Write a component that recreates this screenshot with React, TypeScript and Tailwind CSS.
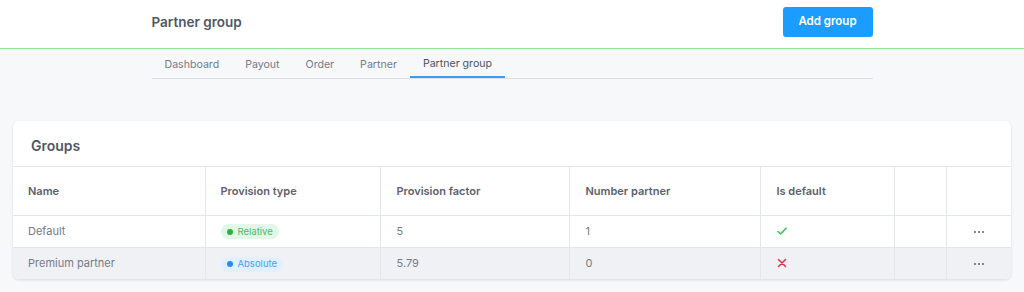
import React from 'react';

const tabs = ['Dashboard', 'Payout', 'Order', 'Partner', 'Partner group'];

type Group = {
    name: string;
    type: 'Relative' | 'Absolute';
    factor: string;
    partners: number;
    isDefault: boolean;
};

const groups: Group[] = [
    { name: 'Default', type: 'Relative', factor: '5', partners: 1, isDefault: true },
    { name: 'Premium partner', type: 'Absolute', factor: '5.79', partners: 0, isDefault: false },
];

const TypeBadge: React.FC<{ type: Group['type'] }> = ({ type }) =>
    type === 'Relative' ? (
        <span className="inline-flex items-center h-[15px] px-[6px] rounded-full bg-[#e2f7e6] text-[#4cbc62] text-[9.5px] align-middle">
            <span className="w-[6px] h-[6px] rounded-full bg-[#27b33f] mr-[5px]" />
            Relative
        </span>
    ) : (
        <span className="inline-flex items-center h-[15px] px-[6px] rounded-full bg-[#e2efff] text-[#4a9ff0] text-[9.5px] align-middle">
            <span className="w-[6px] h-[6px] rounded-full bg-[#1f8ef5] mr-[5px]" />
            Absolute
        </span>
    );

const App: React.FC = () => {
    return (
        <div className="min-h-[292px] bg-[#f7f8fa] font-['Inter',sans-serif]">
            <header className="bg-white border-b border-[#8fe89a]">
                <div className="w-[721px] mx-auto h-[48px] flex items-center justify-between">
                    <h1 className="text-[13.5px] font-semibold text-[#4f5765] -mt-[4px]">Partner group</h1>
                    <button className="h-[30px] w-[90px] -mt-[4px] rounded-[3px] bg-[#1b9cff] text-white text-[11.5px] font-semibold">
                        Add group
                    </button>
                </div>
            </header>

            <nav className="w-[721px] mx-auto flex border-b border-[#dde1e7]">
                {tabs.map(tab => (
                    <button
                        key={tab}
                        className={
                            tab === 'Partner group'
                                ? 'px-[13px] h-[29px] pt-[2px] text-[10.6px] text-[#4b5260] border-b-2 border-[#3a9df0] -mb-px'
                                : 'px-[13px] h-[29px] pt-[2px] text-[10.6px] text-[#737b88]'
                        }
                    >
                        {tab}
                    </button>
                ))}
            </nav>

            <div className="px-[13px] pt-[42px]">
                <div className="bg-white rounded-[6px] shadow-[0_1px_3px_rgba(0,0,0,0.12)] overflow-hidden">
                    <div className="h-[46px] flex items-center px-[18px] pt-[4px] border-b border-[#e3e6ea]">
                        <h2 className="text-[14px] font-semibold text-[#4f5765]">Groups</h2>
                    </div>
                    <table className="w-full border-collapse table-fixed text-[11px]">
                        <colgroup>
                            <col className="w-[192px]" />
                            <col className="w-[175px]" />
                            <col className="w-[189px]" />
                            <col className="w-[191px]" />
                            <col className="w-[134px]" />
                            <col className="w-[52px]" />
                            <col className="w-[66px]" />
                        </colgroup>
                        <thead>
                            <tr className="h-[48px] text-left text-[#5a616e] font-semibold">
                                <th className="pl-[15px] font-semibold">Name</th>
                                <th className="pl-[15px] font-semibold border-l border-[#e3e6ea]">Provision type</th>
                                <th className="pl-[16px] font-semibold border-l border-[#e3e6ea]">Provision factor</th>
                                <th className="pl-[16px] font-semibold border-l border-[#e3e6ea]">Number partner</th>
                                <th className="pl-[16px] font-semibold border-l border-[#e3e6ea]">Is default</th>
                                <th className="border-l border-[#e3e6ea]" />
                                <th className="border-l border-[#e3e6ea]" />
                            </tr>
                        </thead>
                        <tbody>
                            {groups.map((g, i) => (
                                <tr
                                    key={g.name}
                                    className={i % 2 === 1 ? 'h-[32px] bg-[#f0f1f4] text-[#737b88] border-t border-[#e3e6ea]' : 'h-[32px] text-[#737b88] border-t border-[#e3e6ea]'}
                                >
                                    <td className="pl-[15px]">{g.name}</td>
                                    <td className="pl-[15px] border-l border-[#e3e6ea]">
                                        <TypeBadge type={g.type} />
                                    </td>
                                    <td className="pl-[16px] border-l border-[#e3e6ea]">{g.factor}</td>
                                    <td className="pl-[16px] border-l border-[#e3e6ea]">{g.partners}</td>
                                    <td className="pl-[16px] border-l border-[#e3e6ea]">
                                        {g.isDefault ? (
                                            <svg width="10" height="10" viewBox="0 0 10 10" fill="none" stroke="#3ec45a" strokeWidth="1.6" strokeLinecap="round" strokeLinejoin="round">
                                                <path d="M1 5.5l2.6 2.5L9 2.2" />
                                            </svg>
                                        ) : (
                                            <svg width="10" height="10" viewBox="0 0 10 10" fill="none" stroke="#e0364f" strokeWidth="1.6" strokeLinecap="round">
                                                <path d="M1.5 1.5l7 7M8.5 1.5l-7 7" />
                                            </svg>
                                        )}
                                    </td>
                                    <td className="border-l border-[#e3e6ea]" />
                                    <td className="border-l border-[#e3e6ea] text-center">
                                        <span className="inline-flex gap-[2px] align-middle">
                                            <span className="w-[2px] h-[2px] rounded-full bg-[#5a616e]" />
                                            <span className="w-[2px] h-[2px] rounded-full bg-[#5a616e]" />
                                            <span className="w-[2px] h-[2px] rounded-full bg-[#5a616e]" />
                                        </span>
                                    </td>
                                </tr>
                            ))}
                        </tbody>
                    </table>
                </div>
            </div>
        </div>
    );
};

export default App;
